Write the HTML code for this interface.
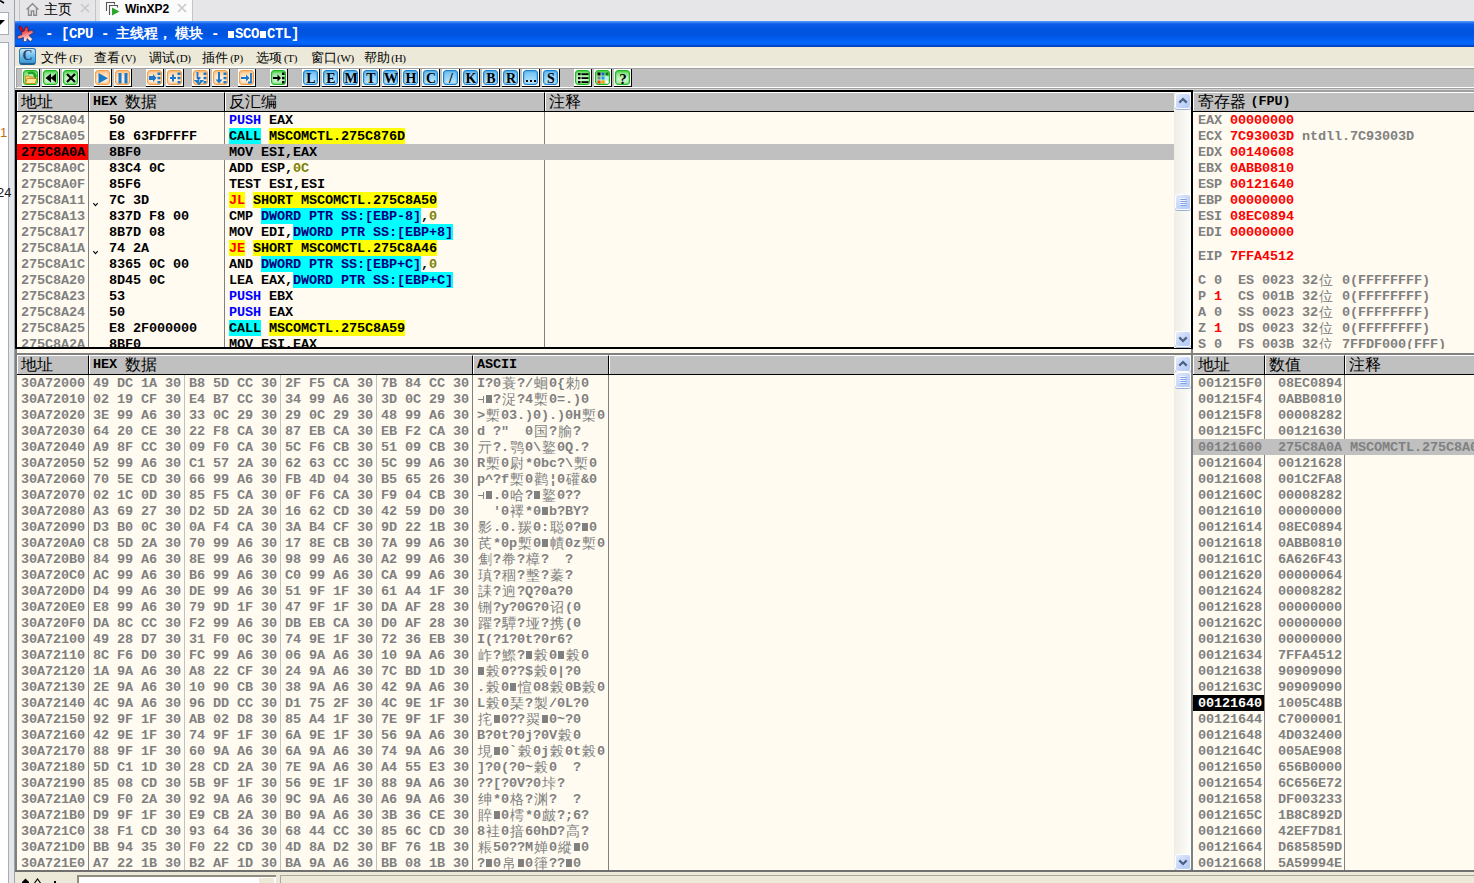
<!DOCTYPE html><html><head><meta charset="utf-8"><style>
*{box-sizing:border-box}
html,body{margin:0;padding:0}
body{width:1474px;height:883px;overflow:hidden;position:relative;background:#fff;font-family:"Liberation Mono",monospace}
.a{position:absolute}
.t{position:absolute;white-space:pre;font:bold 13.5px/16px "Liberation Mono",monospace;letter-spacing:-0.1px;height:16px}
.w{display:inline-block;width:16px;font-style:normal;font-weight:normal;font-size:14px;text-align:center;vertical-align:top;line-height:16px;letter-spacing:0}
.blk{display:inline-block;width:8px;height:16px;position:relative;font-style:normal;vertical-align:top}
.blk:after{content:"";position:absolute;left:1px;top:3px;width:6px;height:8px;background:currentColor}
.tk{display:inline-block;width:8px;height:16px;position:relative;font-style:normal;vertical-align:top}
.tk:before{content:"";position:absolute;left:1px;top:7px;width:6px;height:1px;background:currentColor}
.tk:after{content:"";position:absolute;left:6px;top:4px;width:1px;height:7px;background:currentColor}
.hdr{position:absolute;background:#c0c0c0;border-top:1px solid #fff;border-left:1px solid #fff;border-right:1px solid #000}
.ht{position:absolute;white-space:pre;font:16px/19px "Liberation Sans",sans-serif;color:#000}
.hb{font:bold 13.5px/19px "Liberation Mono",monospace;letter-spacing:-0.1px;vertical-align:top}
.hl{position:absolute;height:16px}
</style></head><body>
<div class="a" style="left:0;top:0;width:14px;height:883px;background:#e4e6ea"></div>
<div class="a" style="left:14px;top:0;width:1px;height:883px;background:#a0a4aa"></div>
<div class="a" style="left:0;top:12px;width:9px;height:23px;border:1px solid #a9adb4;border-left:none;background:#fff"></div>
<div class="a" style="left:0;top:42px;width:9px;height:841px;border-top:1px solid #a9adb4;border-right:1px solid #a9adb4;background:#fff"></div>
<svg class="a" style="left:0;top:0" width="8" height="30"><path d="M0 0.5 L4 3" stroke="#000" stroke-width="1.5"/><path d="M0 20 L5 20 L0 25 Z" fill="#000"/></svg>
<div class="a" style="left:0;top:125px;font:13px/16px 'Liberation Sans';color:#c07010;white-space:pre">1</div>
<div class="a" style="left:-3px;top:185px;font:13px/16px 'Liberation Sans';color:#202020;white-space:pre">24</div>
<div class="a" style="left:15px;top:0;width:1459px;height:21px;background:#e6e6e9"></div>
<div class="a" style="left:19px;top:0;width:1px;height:21px;background:#c4c4c8"></div>
<div class="a" style="left:95px;top:0;width:1px;height:21px;background:#c4c4c8"></div>
<div class="a" style="left:100px;top:0;width:92px;height:21px;background:#fbfbfb"></div>
<div class="a" style="left:192px;top:0;width:1px;height:21px;background:#c4c4c8"></div>
<svg class="a" style="left:25px;top:2px" width="15" height="14" viewBox="0 0 15 14"><path d="M1.5 7.5 L7.5 1.8 L13.5 7.5 M3.5 6 V13.2 H6.3 V9 H8.7 V13.2 H11.5 V6" fill="none" stroke="#8c8c8c" stroke-width="1.4"/></svg>
<div class="a" style="left:44px;top:0;font:13.5px/19px 'Liberation Sans';color:#000;white-space:pre">主页</div>
<svg class="a" style="left:80px;top:3px" width="10" height="10"><path d="M1 1 L9 9 M9 1 L1 9" stroke="#c8c8c8" stroke-width="1.6"/></svg>
<svg class="a" style="left:105px;top:1px" width="17" height="16" viewBox="0 0 17 16"><path d="M1.5 10 V1.5 H9.5 V3.5" fill="none" stroke="#555" stroke-width="1.1"/><path d="M4.5 14 V4.5 H12.5 V6.5" fill="none" stroke="#555" stroke-width="1.1"/><path d="M7 6.5 L14.5 10.5 L7 14.5 Z" fill="#2aa52a"/></svg>
<div class="a" style="left:125px;top:0;font:bold 12px/18px 'Liberation Sans';color:#000;white-space:pre;letter-spacing:-0.1px">WinXP2</div>
<svg class="a" style="left:177px;top:3px" width="10" height="10"><path d="M1 1 L9 9 M9 1 L1 9" stroke="#c8c8c8" stroke-width="1.6"/></svg>
<div class="a" style="left:15px;top:21px;width:1459px;height:26px;background:linear-gradient(#5aa0ff 0px,#2f7cf6 1.5px,#0c5ce6 3px,#0055e0 8px,#0054e0 14px,#005ef0 18px,#0066ff 22px,#005cf0 23.5px,#0044c4 25px,#003cb0 26px)"></div>
<svg class="a" style="left:17px;top:25px" width="17" height="17" viewBox="0 0 17 17"><defs><linearGradient id="sp" x1="0" y1="0" x2="0.3" y2="1"><stop offset="0" stop-color="#f00"/><stop offset="0.5" stop-color="#f46060"/><stop offset="1" stop-color="#fff0ee"/></linearGradient></defs><path d="M2 1 Q4 0.5 5 3 L6.5 6 L5 7 Q1.5 4 2 1 Z" fill="#f00" stroke="#300" stroke-opacity=".55" stroke-width=".8"/><path d="M4.5 7.5 L7.5 5.8 L8.2 1.8 L10.8 1.8 L11 6.5 L15 5 L16.5 7.5 L12 10.5 L15.5 14 L13.5 16.5 L10 13.5 L9.5 16.5 L6.5 16.5 L6.5 12.5 L1 14 L0.3 11.3 L5 9.5 Z" fill="url(#sp)" stroke="#300" stroke-opacity=".55" stroke-width=".8"/></svg>
<div class="a" style="left:45px;top:25px;font:bold 14px/18px 'Liberation Mono';color:#fff;white-space:pre"><i style="display:inline-block;width:8px;text-align:center;font-style:normal">-</i><i style="display:inline-block;width:8px"> </i><i style="display:inline-block;width:8px;text-align:center;font-style:normal">[</i><i style="display:inline-block;width:8px;text-align:center;font-style:normal">C</i><i style="display:inline-block;width:8px;text-align:center;font-style:normal">P</i><i style="display:inline-block;width:8px;text-align:center;font-style:normal">U</i><i style="display:inline-block;width:8px"> </i><i style="display:inline-block;width:8px;text-align:center;font-style:normal">-</i><i style="display:inline-block;width:8px"> </i></div>
<div class="a" style="left:116px;top:24px;font:bold 13.5px/19px 'Liberation Serif';color:#fff;white-space:pre">主线程，</div>
<div class="a" style="left:175px;top:24px;font:bold 13.5px/19px 'Liberation Serif';color:#fff;white-space:pre">模块</div>
<div class="a" style="left:203px;top:25px;font:bold 14px/18px 'Liberation Mono';color:#fff;white-space:pre"><i style="display:inline-block;width:8px"> </i><i style="display:inline-block;width:8px;text-align:center;font-style:normal">-</i><i style="display:inline-block;width:8px"> </i><i style="display:inline-block;width:8px;height:18px;position:relative;vertical-align:top"><b style="position:absolute;left:1px;top:6px;width:6px;height:7px;background:#fff"></b></i><i style="display:inline-block;width:8px;text-align:center;font-style:normal">S</i><i style="display:inline-block;width:8px;text-align:center;font-style:normal">C</i><i style="display:inline-block;width:8px;text-align:center;font-style:normal">O</i><i style="display:inline-block;width:8px;height:18px;position:relative;vertical-align:top"><b style="position:absolute;left:1px;top:6px;width:6px;height:7px;background:#fff"></b></i><i style="display:inline-block;width:8px;text-align:center;font-style:normal">C</i><i style="display:inline-block;width:8px;text-align:center;font-style:normal">T</i><i style="display:inline-block;width:8px;text-align:center;font-style:normal">L</i><i style="display:inline-block;width:8px;text-align:center;font-style:normal">]</i></div>
<div class="a" style="left:15px;top:47px;width:1459px;height:19px;background:#ece9d8"></div>
<div class="a" style="left:15px;top:66px;width:1459px;height:2px;background:#fbfaf5"></div>
<div class="a" style="left:19px;top:48px;width:17px;height:17px;border-radius:3px;background:linear-gradient(#c8e8fb,#62b8ee 55%,#3a98d8);border:1px solid #3577b0;border-bottom:2px solid #255d8e"></div>
<div class="a" style="left:19px;top:46px;width:17px;text-align:center;font:bold 14px/19px 'Liberation Serif';color:#2c4468">C</div>
<div class="a" style="left:41px;top:49px;font:12.5px/19px 'Liberation Serif';color:#000;white-space:pre">文件<span style="font:11px/19px 'Liberation Serif';display:inline-block;width:17px;text-align:center;letter-spacing:-0.3px">(F)</span></div>
<div class="a" style="left:94px;top:49px;font:12.5px/19px 'Liberation Serif';color:#000;white-space:pre">查看<span style="font:11px/19px 'Liberation Serif';display:inline-block;width:17px;text-align:center;letter-spacing:-0.3px">(V)</span></div>
<div class="a" style="left:149px;top:49px;font:12.5px/19px 'Liberation Serif';color:#000;white-space:pre">调试<span style="font:11px/19px 'Liberation Serif';display:inline-block;width:17px;text-align:center;letter-spacing:-0.3px">(D)</span></div>
<div class="a" style="left:202px;top:49px;font:12.5px/19px 'Liberation Serif';color:#000;white-space:pre">插件<span style="font:11px/19px 'Liberation Serif';display:inline-block;width:17px;text-align:center;letter-spacing:-0.3px">(P)</span></div>
<div class="a" style="left:256px;top:49px;font:12.5px/19px 'Liberation Serif';color:#000;white-space:pre">选项<span style="font:11px/19px 'Liberation Serif';display:inline-block;width:17px;text-align:center;letter-spacing:-0.3px">(T)</span></div>
<div class="a" style="left:311px;top:49px;font:12.5px/19px 'Liberation Serif';color:#000;white-space:pre">窗口<span style="font:11px/19px 'Liberation Serif';display:inline-block;width:17px;text-align:center;letter-spacing:-0.3px">(W)</span></div>
<div class="a" style="left:364px;top:49px;font:12.5px/19px 'Liberation Serif';color:#000;white-space:pre">帮助<span style="font:11px/19px 'Liberation Serif';display:inline-block;width:17px;text-align:center;letter-spacing:-0.3px">(H)</span></div>
<div class="a" style="left:16px;top:68px;width:1458px;height:20px;background:#c0c0c0;border-top:1px solid #a0a0a0;border-left:1px solid #a0a0a0;border-bottom:1px solid #fff"></div>
<div class="a" style="left:15px;top:88px;width:1459px;height:1px;background:#a0a0a0"></div>
<div class="a" style="left:15px;top:89px;width:1459px;height:1px;background:#d4d4d4"></div>
<div class="a" style="left:22px;top:69px;width:18px;height:18px;background:#fff;border-right:1px solid #000;border-bottom:1px solid #000"></div><div class="a" style="left:23px;top:70px;width:15px;height:15px;border-radius:3px;background:linear-gradient(#5cd85c 0%,#9ce89c 25%,#d0f5d0 60%,#a8eca8 100%);border:1px solid #1cb81c;box-shadow:inset 0 0 2px #1cb81c"></div><svg class="a" style="left:23px;top:70px" width="16" height="16" viewBox="0 0 16 16"><path d="M2.5 6 H6 L7 7 H12 V13.5 H2.5 Z" fill="#f8d870" stroke="#d09020" stroke-width="1"/><path d="M2.5 13.5 L4.2 8.5 H14 L12 13.5 Z" fill="#ffe89a" stroke="#d09020" stroke-width="1"/><path d="M5 3.5 Q10 1 12.5 5.5" fill="none" stroke="#20a020" stroke-width="2"/><path d="M10 5.5 L14 5 L12.5 9 Z" fill="#20a020"/></svg>
<div class="a" style="left:42px;top:69px;width:18px;height:18px;background:#fff;border-right:1px solid #000;border-bottom:1px solid #000"></div><div class="a" style="left:43px;top:70px;width:15px;height:15px;border-radius:3px;background:linear-gradient(#5cd85c 0%,#9ce89c 25%,#d0f5d0 60%,#a8eca8 100%);border:1px solid #1cb81c;box-shadow:inset 0 0 2px #1cb81c"></div><svg class="a" style="left:43px;top:70px" width="16" height="16" viewBox="0 0 16 16"><path d="M2.5 8 L8 3.5 V12.5 Z M7.5 8 L13 3.5 V12.5 Z" fill="#000"/></svg>
<div class="a" style="left:62px;top:69px;width:18px;height:18px;background:#fff;border-right:1px solid #000;border-bottom:1px solid #000"></div><div class="a" style="left:63px;top:70px;width:15px;height:15px;border-radius:3px;background:linear-gradient(#5cd85c 0%,#9ce89c 25%,#d0f5d0 60%,#a8eca8 100%);border:1px solid #1cb81c;box-shadow:inset 0 0 2px #1cb81c"></div><svg class="a" style="left:63px;top:70px" width="16" height="16" viewBox="0 0 16 16"><path d="M4 4 L12 12 M12 4 L4 12" stroke="#000" stroke-width="2.2"/></svg>
<div class="a" style="left:94px;top:69px;width:18px;height:18px;background:#fff;border-right:1px solid #000;border-bottom:1px solid #000"></div><div class="a" style="left:95px;top:70px;width:15px;height:15px;border-radius:3px;background:linear-gradient(#ffc890 0%,#ffe2c4 35%,#fff0e0 65%,#ffd8b0 100%);border:1px solid #f3a048;box-shadow:inset 0 0 2px #f3a048"></div><svg class="a" style="left:95px;top:70px" width="16" height="16" viewBox="0 0 16 16"><path d="M3.5 3 L13 8.3 L3.5 13.5 Z" fill="#1a78c8"/></svg>
<div class="a" style="left:114px;top:69px;width:18px;height:18px;background:#fff;border-right:1px solid #000;border-bottom:1px solid #000"></div><div class="a" style="left:115px;top:70px;width:15px;height:15px;border-radius:3px;background:linear-gradient(#ffc890 0%,#ffe2c4 35%,#fff0e0 65%,#ffd8b0 100%);border:1px solid #f3a048;box-shadow:inset 0 0 2px #f3a048"></div><svg class="a" style="left:115px;top:70px" width="16" height="16" viewBox="0 0 16 16"><rect x="3.5" y="3" width="3" height="10.5" fill="#1a78c8"/><rect x="9.5" y="3" width="3" height="10.5" fill="#1a78c8"/></svg>
<div class="a" style="left:146px;top:69px;width:18px;height:18px;background:#fff;border-right:1px solid #000;border-bottom:1px solid #000"></div><div class="a" style="left:147px;top:70px;width:15px;height:15px;border-radius:3px;background:linear-gradient(#ffc890 0%,#ffe2c4 35%,#fff0e0 65%,#ffd8b0 100%);border:1px solid #f3a048;box-shadow:inset 0 0 2px #f3a048"></div><svg class="a" style="left:147px;top:70px" width="16" height="16" viewBox="0 0 16 16"><path d="M2 6 H6 V4 L9.5 8 L6 12 V10 H2 Z" fill="#1a78c8"/><rect x="10.5" y="2.5" width="3" height="2.5" fill="#1a78c8"/><rect x="10.5" y="6.8" width="3" height="2.5" fill="#1a78c8"/><rect x="10.5" y="11" width="3" height="2.5" fill="#1a78c8"/></svg>
<div class="a" style="left:166px;top:69px;width:18px;height:18px;background:#fff;border-right:1px solid #000;border-bottom:1px solid #000"></div><div class="a" style="left:167px;top:70px;width:15px;height:15px;border-radius:3px;background:linear-gradient(#ffc890 0%,#ffe2c4 35%,#fff0e0 65%,#ffd8b0 100%);border:1px solid #f3a048;box-shadow:inset 0 0 2px #f3a048"></div><svg class="a" style="left:167px;top:70px" width="16" height="16" viewBox="0 0 16 16"><path d="M3 7 H5 V4.5 H7 V7 H9 V9 H7 V11.5 H5 V9 H3 Z" fill="#1a78c8"/><rect x="10.5" y="2.5" width="3" height="2.5" fill="#1a78c8"/><rect x="10.5" y="6.8" width="3" height="2.5" fill="#1a78c8"/><rect x="10.5" y="11" width="3" height="2.5" fill="#1a78c8"/></svg>
<div class="a" style="left:192px;top:69px;width:18px;height:18px;background:#fff;border-right:1px solid #000;border-bottom:1px solid #000"></div><div class="a" style="left:193px;top:70px;width:15px;height:15px;border-radius:3px;background:linear-gradient(#ffc890 0%,#ffe2c4 35%,#fff0e0 65%,#ffd8b0 100%);border:1px solid #f3a048;box-shadow:inset 0 0 2px #f3a048"></div><svg class="a" style="left:193px;top:70px" width="16" height="16" viewBox="0 0 16 16"><path d="M4.5 2 V8 L7.5 8 M5.5 8 V11 H3 L6 14 L9 11 H7" fill="none" stroke="#1a78c8" stroke-width="1.8"/><rect x="10.5" y="2.5" width="3" height="2.5" fill="#1a78c8"/><rect x="10.5" y="6.8" width="3" height="2.5" fill="#1a78c8"/><rect x="10.5" y="11" width="3" height="2.5" fill="#1a78c8"/></svg>
<div class="a" style="left:212px;top:69px;width:18px;height:18px;background:#fff;border-right:1px solid #000;border-bottom:1px solid #000"></div><div class="a" style="left:213px;top:70px;width:15px;height:15px;border-radius:3px;background:linear-gradient(#ffc890 0%,#ffe2c4 35%,#fff0e0 65%,#ffd8b0 100%);border:1px solid #f3a048;box-shadow:inset 0 0 2px #f3a048"></div><svg class="a" style="left:213px;top:70px" width="16" height="16" viewBox="0 0 16 16"><path d="M6 2 V10" stroke="#1a78c8" stroke-width="2"/><path d="M2.5 9.5 H9.5 L6 13.5 Z" fill="#1a78c8"/><rect x="10.5" y="2.5" width="3" height="2.5" fill="#1a78c8"/><rect x="10.5" y="6.8" width="3" height="2.5" fill="#1a78c8"/><rect x="10.5" y="11" width="3" height="2.5" fill="#1a78c8"/></svg>
<div class="a" style="left:238px;top:69px;width:18px;height:18px;background:#fff;border-right:1px solid #000;border-bottom:1px solid #000"></div><div class="a" style="left:239px;top:70px;width:15px;height:15px;border-radius:3px;background:linear-gradient(#ffc890 0%,#ffe2c4 35%,#fff0e0 65%,#ffd8b0 100%);border:1px solid #f3a048;box-shadow:inset 0 0 2px #f3a048"></div><svg class="a" style="left:239px;top:70px" width="16" height="16" viewBox="0 0 16 16"><path d="M2 7 H7 V4.5 L10.5 8 L7 11.5 V9 H2 Z" fill="#1a78c8"/><path d="M12 3 V12.5 H9" fill="none" stroke="#1a78c8" stroke-width="1.8"/></svg>
<div class="a" style="left:270px;top:69px;width:18px;height:18px;background:#fff;border-right:1px solid #000;border-bottom:1px solid #000"></div><div class="a" style="left:271px;top:70px;width:15px;height:15px;border-radius:3px;background:linear-gradient(#5cd85c 0%,#9ce89c 25%,#d0f5d0 60%,#a8eca8 100%);border:1px solid #1cb81c;box-shadow:inset 0 0 2px #1cb81c"></div><svg class="a" style="left:271px;top:70px" width="16" height="16" viewBox="0 0 16 16"><path d="M2 7 H6.5 V4.5 L10 8 L6.5 11.5 V9 H2 Z" fill="#000"/><rect x="11" y="2.5" width="2.5" height="2.5" fill="#000"/><rect x="11" y="6.8" width="2.5" height="2.5" fill="#000"/><rect x="11" y="11" width="2.5" height="2.5" fill="#000"/></svg>
<div class="a" style="left:302px;top:69px;width:18px;height:18px;background:#fff;border-right:1px solid #000;border-bottom:1px solid #000"></div><div class="a" style="left:303px;top:70px;width:15px;height:15px;border-radius:3px;background:linear-gradient(#6ec0f0 0%,#8fd0f6 40%,#b4e2fb 80%,#c8ecfd 100%);border:1px solid #1880d0;box-shadow:inset 0 0 2px #1880d0"></div><svg class="a" style="left:303px;top:70px" width="16" height="16" viewBox="0 0 16 16"><text x="8" y="13" text-anchor="middle" font-family="Liberation Serif" font-weight="bold" font-size="14" fill="#000">L</text></svg>
<div class="a" style="left:322px;top:69px;width:18px;height:18px;background:#fff;border-right:1px solid #000;border-bottom:1px solid #000"></div><div class="a" style="left:323px;top:70px;width:15px;height:15px;border-radius:3px;background:linear-gradient(#6ec0f0 0%,#8fd0f6 40%,#b4e2fb 80%,#c8ecfd 100%);border:1px solid #1880d0;box-shadow:inset 0 0 2px #1880d0"></div><svg class="a" style="left:323px;top:70px" width="16" height="16" viewBox="0 0 16 16"><text x="8" y="13" text-anchor="middle" font-family="Liberation Serif" font-weight="bold" font-size="14" fill="#000">E</text></svg>
<div class="a" style="left:342px;top:69px;width:18px;height:18px;background:#fff;border-right:1px solid #000;border-bottom:1px solid #000"></div><div class="a" style="left:343px;top:70px;width:15px;height:15px;border-radius:3px;background:linear-gradient(#6ec0f0 0%,#8fd0f6 40%,#b4e2fb 80%,#c8ecfd 100%);border:1px solid #1880d0;box-shadow:inset 0 0 2px #1880d0"></div><svg class="a" style="left:343px;top:70px" width="16" height="16" viewBox="0 0 16 16"><text x="8" y="13" text-anchor="middle" font-family="Liberation Serif" font-weight="bold" font-size="14" fill="#000">M</text></svg>
<div class="a" style="left:362px;top:69px;width:18px;height:18px;background:#fff;border-right:1px solid #000;border-bottom:1px solid #000"></div><div class="a" style="left:363px;top:70px;width:15px;height:15px;border-radius:3px;background:linear-gradient(#6ec0f0 0%,#8fd0f6 40%,#b4e2fb 80%,#c8ecfd 100%);border:1px solid #1880d0;box-shadow:inset 0 0 2px #1880d0"></div><svg class="a" style="left:363px;top:70px" width="16" height="16" viewBox="0 0 16 16"><text x="8" y="13" text-anchor="middle" font-family="Liberation Serif" font-weight="bold" font-size="14" fill="#000">T</text></svg>
<div class="a" style="left:382px;top:69px;width:18px;height:18px;background:#fff;border-right:1px solid #000;border-bottom:1px solid #000"></div><div class="a" style="left:383px;top:70px;width:15px;height:15px;border-radius:3px;background:linear-gradient(#6ec0f0 0%,#8fd0f6 40%,#b4e2fb 80%,#c8ecfd 100%);border:1px solid #1880d0;box-shadow:inset 0 0 2px #1880d0"></div><svg class="a" style="left:383px;top:70px" width="16" height="16" viewBox="0 0 16 16"><text x="8" y="13" text-anchor="middle" font-family="Liberation Serif" font-weight="bold" font-size="14" fill="#000">W</text></svg>
<div class="a" style="left:402px;top:69px;width:18px;height:18px;background:#fff;border-right:1px solid #000;border-bottom:1px solid #000"></div><div class="a" style="left:403px;top:70px;width:15px;height:15px;border-radius:3px;background:linear-gradient(#6ec0f0 0%,#8fd0f6 40%,#b4e2fb 80%,#c8ecfd 100%);border:1px solid #1880d0;box-shadow:inset 0 0 2px #1880d0"></div><svg class="a" style="left:403px;top:70px" width="16" height="16" viewBox="0 0 16 16"><text x="8" y="13" text-anchor="middle" font-family="Liberation Serif" font-weight="bold" font-size="14" fill="#000">H</text></svg>
<div class="a" style="left:422px;top:69px;width:18px;height:18px;background:#fff;border-right:1px solid #000;border-bottom:1px solid #000"></div><div class="a" style="left:423px;top:70px;width:15px;height:15px;border-radius:3px;background:linear-gradient(#6ec0f0 0%,#8fd0f6 40%,#b4e2fb 80%,#c8ecfd 100%);border:1px solid #1880d0;box-shadow:inset 0 0 2px #1880d0"></div><svg class="a" style="left:423px;top:70px" width="16" height="16" viewBox="0 0 16 16"><text x="8" y="13" text-anchor="middle" font-family="Liberation Serif" font-weight="bold" font-size="14" fill="#000">C</text></svg>
<div class="a" style="left:442px;top:69px;width:18px;height:18px;background:#fff;border-right:1px solid #000;border-bottom:1px solid #000"></div><div class="a" style="left:443px;top:70px;width:15px;height:15px;border-radius:3px;background:linear-gradient(#6ec0f0 0%,#8fd0f6 40%,#b4e2fb 80%,#c8ecfd 100%);border:1px solid #1880d0;box-shadow:inset 0 0 2px #1880d0"></div><svg class="a" style="left:443px;top:70px" width="16" height="16" viewBox="0 0 16 16"><text x="8" y="13" text-anchor="middle" font-family="Liberation Serif" font-weight="bold" font-size="14" fill="#000">/</text></svg>
<div class="a" style="left:462px;top:69px;width:18px;height:18px;background:#fff;border-right:1px solid #000;border-bottom:1px solid #000"></div><div class="a" style="left:463px;top:70px;width:15px;height:15px;border-radius:3px;background:linear-gradient(#6ec0f0 0%,#8fd0f6 40%,#b4e2fb 80%,#c8ecfd 100%);border:1px solid #1880d0;box-shadow:inset 0 0 2px #1880d0"></div><svg class="a" style="left:463px;top:70px" width="16" height="16" viewBox="0 0 16 16"><text x="8" y="13" text-anchor="middle" font-family="Liberation Serif" font-weight="bold" font-size="14" fill="#000">K</text></svg>
<div class="a" style="left:482px;top:69px;width:18px;height:18px;background:#fff;border-right:1px solid #000;border-bottom:1px solid #000"></div><div class="a" style="left:483px;top:70px;width:15px;height:15px;border-radius:3px;background:linear-gradient(#6ec0f0 0%,#8fd0f6 40%,#b4e2fb 80%,#c8ecfd 100%);border:1px solid #1880d0;box-shadow:inset 0 0 2px #1880d0"></div><svg class="a" style="left:483px;top:70px" width="16" height="16" viewBox="0 0 16 16"><text x="8" y="13" text-anchor="middle" font-family="Liberation Serif" font-weight="bold" font-size="14" fill="#000">B</text></svg>
<div class="a" style="left:502px;top:69px;width:18px;height:18px;background:#fff;border-right:1px solid #000;border-bottom:1px solid #000"></div><div class="a" style="left:503px;top:70px;width:15px;height:15px;border-radius:3px;background:linear-gradient(#6ec0f0 0%,#8fd0f6 40%,#b4e2fb 80%,#c8ecfd 100%);border:1px solid #1880d0;box-shadow:inset 0 0 2px #1880d0"></div><svg class="a" style="left:503px;top:70px" width="16" height="16" viewBox="0 0 16 16"><text x="8" y="13" text-anchor="middle" font-family="Liberation Serif" font-weight="bold" font-size="14" fill="#000">R</text></svg>
<div class="a" style="left:522px;top:69px;width:18px;height:18px;background:#fff;border-right:1px solid #000;border-bottom:1px solid #000"></div><div class="a" style="left:523px;top:70px;width:15px;height:15px;border-radius:3px;background:linear-gradient(#6ec0f0 0%,#8fd0f6 40%,#b4e2fb 80%,#c8ecfd 100%);border:1px solid #1880d0;box-shadow:inset 0 0 2px #1880d0"></div><svg class="a" style="left:523px;top:70px" width="16" height="16" viewBox="0 0 16 16"><rect x="3" y="10" width="2" height="2" fill="#000"/><rect x="7" y="10" width="2" height="2" fill="#000"/><rect x="11" y="10" width="2" height="2" fill="#000"/></svg>
<div class="a" style="left:542px;top:69px;width:18px;height:18px;background:#fff;border-right:1px solid #000;border-bottom:1px solid #000"></div><div class="a" style="left:543px;top:70px;width:15px;height:15px;border-radius:3px;background:linear-gradient(#6ec0f0 0%,#8fd0f6 40%,#b4e2fb 80%,#c8ecfd 100%);border:1px solid #1880d0;box-shadow:inset 0 0 2px #1880d0"></div><svg class="a" style="left:543px;top:70px" width="16" height="16" viewBox="0 0 16 16"><text x="8" y="13" text-anchor="middle" font-family="Liberation Serif" font-weight="bold" font-size="14" fill="#000">S</text></svg>
<div class="a" style="left:574px;top:69px;width:18px;height:18px;background:#fff;border-right:1px solid #000;border-bottom:1px solid #000"></div><div class="a" style="left:575px;top:70px;width:15px;height:15px;border-radius:3px;background:linear-gradient(#5cd85c 0%,#9ce89c 25%,#d0f5d0 60%,#a8eca8 100%);border:1px solid #1cb81c;box-shadow:inset 0 0 2px #1cb81c"></div><svg class="a" style="left:575px;top:70px" width="16" height="16" viewBox="0 0 16 16"><rect x="3" y="3" width="2.5" height="2.2" fill="#000"/><rect x="3" y="7" width="2.5" height="2.2" fill="#000"/><rect x="3" y="11" width="2.5" height="2.2" fill="#000"/><rect x="6.5" y="3.3" width="7" height="1.8" fill="#000"/><rect x="6.5" y="7.2" width="7" height="1.8" fill="#000"/><rect x="6.5" y="11.2" width="7" height="1.8" fill="#000"/></svg>
<div class="a" style="left:594px;top:69px;width:18px;height:18px;background:#fff;border-right:1px solid #000;border-bottom:1px solid #000"></div><div class="a" style="left:595px;top:70px;width:15px;height:15px;border-radius:3px;background:linear-gradient(#5cd85c 0%,#9ce89c 25%,#d0f5d0 60%,#a8eca8 100%);border:1px solid #1cb81c;box-shadow:inset 0 0 2px #1cb81c"></div><svg class="a" style="left:595px;top:70px" width="16" height="16" viewBox="0 0 16 16"><rect x="2.5" y="2.5" width="3" height="3" fill="#000"/><rect x="6.5" y="2.5" width="3" height="3" fill="#2060d0"/><rect x="10.5" y="2.5" width="3" height="3" fill="#008000"/><rect x="2.5" y="6.5" width="3" height="3" fill="#808080"/><rect x="6.5" y="6.5" width="3" height="3" fill="#10a0f0"/><rect x="10.5" y="6.5" width="3" height="3" fill="#c0e8ff"/><rect x="2.5" y="10.5" width="3" height="3" fill="#f04010"/><rect x="6.5" y="10.5" width="3" height="3" fill="#f8a000"/><rect x="10.5" y="10.5" width="3" height="3" fill="#fff"/></svg>
<div class="a" style="left:614px;top:69px;width:18px;height:18px;background:#fff;border-right:1px solid #000;border-bottom:1px solid #000"></div><div class="a" style="left:615px;top:70px;width:15px;height:15px;border-radius:3px;background:linear-gradient(#5cd85c 0%,#9ce89c 25%,#d0f5d0 60%,#a8eca8 100%);border:1px solid #1cb81c;box-shadow:inset 0 0 2px #1cb81c"></div><svg class="a" style="left:615px;top:70px" width="16" height="16" viewBox="0 0 16 16"><text x="8" y="13.5" text-anchor="middle" font-family="Liberation Serif" font-weight="bold" font-size="15" fill="#000">?</text></svg>
<div class="a" style="left:15px;top:90px;width:1178px;height:259px;background:#000"></div>
<div class="a" style="left:17px;top:92px;width:1174px;height:255px;background:#fffbf0"></div>
<div class="a" style="left:17px;top:92px;width:1157px;height:20px;background:#000"></div>
<div class="hdr" style="left:17px;top:92px;width:72px;height:19px;"></div>
<div class="ht" style="left:21px;top:92px">地址</div>
<div class="hdr" style="left:89px;top:92px;width:136px;height:19px;"></div>
<div class="ht" style="left:93px;top:92px"><span class="hb">HEX </span>数据</div>
<div class="hdr" style="left:225px;top:92px;width:320px;height:19px;"></div>
<div class="ht" style="left:229px;top:92px">反汇编</div>
<div class="hdr" style="left:545px;top:92px;width:629px;height:19px;border-right:none;"></div>
<div class="ht" style="left:549px;top:92px">注释</div>
<div class="a" style="left:88px;top:112px;width:1px;height:235px;background:#808080"></div>
<div class="a" style="left:224px;top:112px;width:1px;height:235px;background:#808080"></div>
<div class="a" style="left:544px;top:112px;width:1px;height:235px;background:#808080"></div>
<div class="a" style="left:17px;top:112px;width:1157px;height:235px;overflow:hidden">
<div class="t" style="left:4px;top:1px;color:#808080;">275C8A04</div>
<div class="t" style="left:92px;top:1px;color:#000;">50</div>
<div class="t" style="left:212px;top:1px;color:#000;"><span style="color:#0000ff">PUSH</span><span style="color:#000"> EAX</span></div>
<div class="t" style="left:4px;top:17px;color:#808080;">275C8A05</div>
<div class="t" style="left:92px;top:17px;color:#000;">E8 63FDFFFF</div>
<div class="hl" style="left:212px;top:16px;width:32px;background:#00ffff"></div>
<div class="hl" style="left:252px;top:16px;width:136px;background:#ffff00"></div>
<div class="t" style="left:212px;top:17px;color:#000;"><span style="color:#000">CALL</span><span style="color:#000"> </span><span style="color:#000">MSCOMCTL.275C876D</span></div>
<div class="hl" style="left:72px;top:32px;width:1085px;background:#c0c0c0"></div>
<div class="hl" style="left:0px;top:32px;width:71px;background:#ff0000"></div>
<div class="t" style="left:4px;top:33px;color:#000;">275C8A0A</div>
<div class="t" style="left:92px;top:33px;color:#000;">8BF0</div>
<div class="t" style="left:212px;top:33px;color:#000;"><span style="color:#000">MOV ESI,EAX</span></div>
<div class="t" style="left:4px;top:49px;color:#808080;">275C8A0C</div>
<div class="t" style="left:92px;top:49px;color:#000;">83C4 0C</div>
<div class="t" style="left:212px;top:49px;color:#000;"><span style="color:#000">ADD ESP,</span><span style="color:#808000">0C</span></div>
<div class="t" style="left:4px;top:65px;color:#808080;">275C8A0F</div>
<div class="t" style="left:92px;top:65px;color:#000;">85F6</div>
<div class="t" style="left:212px;top:65px;color:#000;"><span style="color:#000">TEST ESI,ESI</span></div>
<div class="t" style="left:4px;top:81px;color:#808080;">275C8A11</div>
<div class="t" style="left:92px;top:81px;color:#000;">7C 3D</div>
<svg class="a" style="left:75px;top:80px" width="8" height="16"><path d="M1.3 11.2 L3.5 13.6 L5.7 11.2" fill="none" stroke="#000" stroke-width="1.1"/></svg>
<div class="hl" style="left:212px;top:80px;width:16px;background:#ffff00"></div>
<div class="hl" style="left:236px;top:80px;width:184px;background:#ffff00"></div>
<div class="t" style="left:212px;top:81px;color:#000;"><span style="color:#ff0000">JL</span><span style="color:#000"> </span><span style="color:#000">SHORT MSCOMCTL.275C8A50</span></div>
<div class="t" style="left:4px;top:97px;color:#808080;">275C8A13</div>
<div class="t" style="left:92px;top:97px;color:#000;">837D F8 00</div>
<div class="hl" style="left:244px;top:96px;width:160px;background:#00ffff"></div>
<div class="t" style="left:212px;top:97px;color:#000;"><span style="color:#000">CMP </span><span style="color:#000080">DWORD PTR SS:[EBP-8]</span><span style="color:#000">,</span><span style="color:#808000">0</span></div>
<div class="t" style="left:4px;top:113px;color:#808080;">275C8A17</div>
<div class="t" style="left:92px;top:113px;color:#000;">8B7D 08</div>
<div class="hl" style="left:276px;top:112px;width:160px;background:#00ffff"></div>
<div class="t" style="left:212px;top:113px;color:#000;"><span style="color:#000">MOV EDI,</span><span style="color:#000080">DWORD PTR SS:[EBP+8]</span></div>
<div class="t" style="left:4px;top:129px;color:#808080;">275C8A1A</div>
<div class="t" style="left:92px;top:129px;color:#000;">74 2A</div>
<svg class="a" style="left:75px;top:128px" width="8" height="16"><path d="M1.3 11.2 L3.5 13.6 L5.7 11.2" fill="none" stroke="#000" stroke-width="1.1"/></svg>
<div class="hl" style="left:212px;top:128px;width:16px;background:#ffff00"></div>
<div class="hl" style="left:236px;top:128px;width:184px;background:#ffff00"></div>
<div class="t" style="left:212px;top:129px;color:#000;"><span style="color:#ff0000">JE</span><span style="color:#000"> </span><span style="color:#000">SHORT MSCOMCTL.275C8A46</span></div>
<div class="t" style="left:4px;top:145px;color:#808080;">275C8A1C</div>
<div class="t" style="left:92px;top:145px;color:#000;">8365 0C 00</div>
<div class="hl" style="left:244px;top:144px;width:160px;background:#00ffff"></div>
<div class="t" style="left:212px;top:145px;color:#000;"><span style="color:#000">AND </span><span style="color:#000080">DWORD PTR SS:[EBP+C]</span><span style="color:#000">,</span><span style="color:#808000">0</span></div>
<div class="t" style="left:4px;top:161px;color:#808080;">275C8A20</div>
<div class="t" style="left:92px;top:161px;color:#000;">8D45 0C</div>
<div class="hl" style="left:276px;top:160px;width:160px;background:#00ffff"></div>
<div class="t" style="left:212px;top:161px;color:#000;"><span style="color:#000">LEA EAX,</span><span style="color:#000080">DWORD PTR SS:[EBP+C]</span></div>
<div class="t" style="left:4px;top:177px;color:#808080;">275C8A23</div>
<div class="t" style="left:92px;top:177px;color:#000;">53</div>
<div class="t" style="left:212px;top:177px;color:#000;"><span style="color:#0000ff">PUSH</span><span style="color:#000"> EBX</span></div>
<div class="t" style="left:4px;top:193px;color:#808080;">275C8A24</div>
<div class="t" style="left:92px;top:193px;color:#000;">50</div>
<div class="t" style="left:212px;top:193px;color:#000;"><span style="color:#0000ff">PUSH</span><span style="color:#000"> EAX</span></div>
<div class="t" style="left:4px;top:209px;color:#808080;">275C8A25</div>
<div class="t" style="left:92px;top:209px;color:#000;">E8 2F000000</div>
<div class="hl" style="left:212px;top:208px;width:32px;background:#00ffff"></div>
<div class="hl" style="left:252px;top:208px;width:136px;background:#ffff00"></div>
<div class="t" style="left:212px;top:209px;color:#000;"><span style="color:#000">CALL</span><span style="color:#000"> </span><span style="color:#000">MSCOMCTL.275C8A59</span></div>
<div class="t" style="left:4px;top:225px;color:#808080;">275C8A2A</div>
<div class="t" style="left:92px;top:225px;color:#000;">8BF0</div>
<div class="t" style="left:212px;top:225px;color:#000;"><span style="color:#000">MOV ESI,EAX</span></div>
</div>
<div class="a" style="left:1174px;top:92px;width:17px;height:256px;background:linear-gradient(90deg,#eeede6,#f5f4ee 40%,#fdfdfa)"></div>
<div class="a" style="left:1175px;top:93px;width:16px;height:16px;border-radius:3px;background:#fff;box-shadow:0 1px 0 #9ab0e0"></div><div class="a" style="left:1176px;top:94px;width:14px;height:14px;border-radius:2px;background:linear-gradient(135deg,#e4ecfd,#c4d5f8 55%,#b4c9f4)"></div><svg class="a" style="left:1175px;top:93px" width="16" height="16"><path d="M4.3 9.6 L8 6 L11.7 9.6" fill="none" stroke="#4d6185" stroke-width="2.2"/></svg>
<div class="a" style="left:1175px;top:194px;width:16px;height:16px;border-radius:3px;background:#fff;box-shadow:0 1px 0 #9ab0e0"></div><div class="a" style="left:1176px;top:195px;width:14px;height:14px;border-radius:2px;background:linear-gradient(135deg,#e4ecfd,#c4d5f8 55%,#b4c9f4)"></div><svg class="a" style="left:1175px;top:194px" width="16" height="16"><path d="M4.5 4.5 H10.5 M4.5 6.5 H10.5 M4.5 8.5 H10.5 M4.5 10.5 H10.5" fill="none" stroke="#f4f7ff" stroke-width="1"/><path d="M5.5 5.5 H11.5 M5.5 7.5 H11.5 M5.5 9.5 H11.5 M5.5 11.5 H11.5" fill="none" stroke="#7e9fe6" stroke-width="1"/></svg>
<div class="a" style="left:1175px;top:331px;width:16px;height:16px;border-radius:3px;background:#fff;box-shadow:0 1px 0 #9ab0e0"></div><div class="a" style="left:1176px;top:332px;width:14px;height:14px;border-radius:2px;background:linear-gradient(135deg,#e4ecfd,#c4d5f8 55%,#b4c9f4)"></div><svg class="a" style="left:1175px;top:331px" width="16" height="16"><path d="M4.3 6.4 L8 10 L11.7 6.4" fill="none" stroke="#4d6185" stroke-width="2.2"/></svg>
<div class="a" style="left:1191px;top:90px;width:2px;height:259px;background:#000"></div>
<div class="a" style="left:1193px;top:90px;width:281px;height:2px;background:#a0a0a0"></div>
<div class="a" style="left:1193px;top:92px;width:281px;height:257px;background:#fffbf0"></div>
<div class="a" style="left:1193px;top:92px;width:281px;height:20px;background:#000"></div>
<div class="hdr" style="left:1193px;top:92px;width:282px;height:19px;border-right:none;"></div>
<div class="ht" style="left:1198px;top:92px">寄存器 <span class="hb">(FPU)</span></div>
<div class="t" style="left:1198px;top:113px;color:#808080;">EAX <span style="color:#ff0000">00000000</span> </div>
<div class="t" style="left:1198px;top:129px;color:#808080;">ECX <span style="color:#ff0000">7C93003D</span> ntdll.7C93003D</div>
<div class="t" style="left:1198px;top:145px;color:#808080;">EDX <span style="color:#ff0000">00140608</span> </div>
<div class="t" style="left:1198px;top:161px;color:#808080;">EBX <span style="color:#ff0000">0ABB0810</span> </div>
<div class="t" style="left:1198px;top:177px;color:#808080;">ESP <span style="color:#ff0000">00121640</span> </div>
<div class="t" style="left:1198px;top:193px;color:#808080;">EBP <span style="color:#ff0000">00000000</span> </div>
<div class="t" style="left:1198px;top:209px;color:#808080;">ESI <span style="color:#ff0000">08EC0894</span> </div>
<div class="t" style="left:1198px;top:225px;color:#808080;">EDI <span style="color:#ff0000">00000000</span> </div>
<div class="t" style="left:1198px;top:249px;color:#808080;">EIP <span style="color:#ff0000">7FFA4512</span></div>
<div class="t" style="left:1198px;top:273px;color:#808080;">C <span style="color:#808080">0</span>  ES 0023 32<i class="w">位</i> 0(FFFFFFFF)</div>
<div class="t" style="left:1198px;top:289px;color:#808080;">P <span style="color:#ff0000">1</span>  CS 001B 32<i class="w">位</i> 0(FFFFFFFF)</div>
<div class="t" style="left:1198px;top:305px;color:#808080;">A <span style="color:#808080">0</span>  SS 0023 32<i class="w">位</i> 0(FFFFFFFF)</div>
<div class="t" style="left:1198px;top:321px;color:#808080;">Z <span style="color:#ff0000">1</span>  DS 0023 32<i class="w">位</i> 0(FFFFFFFF)</div>
<div class="t" style="left:1198px;top:337px;color:#808080;">S <span style="color:#808080">0</span>  FS 003B 32<i class="w">位</i> 7FFDF000(FFF)</div>
<div class="a" style="left:15px;top:349px;width:1459px;height:4px;background:#fffbf0"></div>
<div class="a" style="left:15px;top:353px;width:1459px;height:2px;background:#808080"></div>
<div class="a" style="left:15px;top:349px;width:2px;height:523px;background:#808080"></div>
<div class="a" style="left:17px;top:355px;width:1174px;height:515px;background:#fffbf0"></div>
<div class="a" style="left:17px;top:355px;width:1157px;height:20px;background:#000"></div>
<div class="hdr" style="left:17px;top:355px;width:72px;height:19px;"></div>
<div class="ht" style="left:21px;top:355px">地址</div>
<div class="hdr" style="left:89px;top:355px;width:384px;height:19px;"></div>
<div class="ht" style="left:93px;top:355px"><span class="hb">HEX </span>数据</div>
<div class="hdr" style="left:473px;top:355px;width:136px;height:19px;"></div>
<div class="ht" style="left:477px;top:355px"><span class="hb">ASCII</span></div>
<div class="hdr" style="left:609px;top:355px;width:565px;height:19px;border-right:none;"></div>
<div class="a" style="left:88px;top:375px;width:1px;height:495px;background:#808080"></div>
<div class="a" style="left:184px;top:375px;width:1px;height:495px;background:#c0c0c0"></div>
<div class="a" style="left:280px;top:375px;width:1px;height:495px;background:#c0c0c0"></div>
<div class="a" style="left:376px;top:375px;width:1px;height:495px;background:#c0c0c0"></div>
<div class="a" style="left:472px;top:375px;width:1px;height:495px;background:#808080"></div>
<div class="a" style="left:608px;top:375px;width:1px;height:495px;background:#808080"></div>
<div class="a" style="left:17px;top:375px;width:1157px;height:495px;overflow:hidden">
<div class="t" style="left:4px;top:1px;color:#808080;">30A72000</div>
<div class="t" style="left:76px;top:1px;color:#808080;">49 DC 1A 30 B8 5D CC 30 2F F5 CA 30 7B 84 CC 30</div>
<div class="t" style="left:460px;top:1px;color:#808080;">I?0<i class="w">蓑</i>?/<i class="w">蛔</i>0{<i class="w">勑</i>0</div>
<div class="t" style="left:4px;top:17px;color:#808080;">30A72010</div>
<div class="t" style="left:76px;top:17px;color:#808080;">02 19 CF 30 E4 B7 CC 30 34 99 A6 30 3D 0C 29 30</div>
<div class="t" style="left:460px;top:17px;color:#808080;"><i class="tk"></i><i class="blk"></i>?<i class="w">浞</i>?4<i class="w">槧</i>0=.)0</div>
<div class="t" style="left:4px;top:33px;color:#808080;">30A72020</div>
<div class="t" style="left:76px;top:33px;color:#808080;">3E 99 A6 30 33 0C 29 30 29 0C 29 30 48 99 A6 30</div>
<div class="t" style="left:460px;top:33px;color:#808080;">&gt;<i class="w">槧</i>03.)0).)0H<i class="w">槧</i>0</div>
<div class="t" style="left:4px;top:49px;color:#808080;">30A72030</div>
<div class="t" style="left:76px;top:49px;color:#808080;">64 20 CE 30 22 F8 CA 30 87 EB CA 30 EB F2 CA 30</div>
<div class="t" style="left:460px;top:49px;color:#808080;">d ?"  0<i class="w">国</i>?<i class="w">腧</i>?</div>
<div class="t" style="left:4px;top:65px;color:#808080;">30A72040</div>
<div class="t" style="left:76px;top:65px;color:#808080;">A9 8F CC 30 09 F0 CA 30 5C F6 CB 30 51 09 CB 30</div>
<div class="t" style="left:460px;top:65px;color:#808080;"><i class="w">亓</i>?.<i class="w">鹗</i>0\<i class="w">鐜</i>0Q.?</div>
<div class="t" style="left:4px;top:81px;color:#808080;">30A72050</div>
<div class="t" style="left:76px;top:81px;color:#808080;">52 99 A6 30 C1 57 2A 30 62 63 CC 30 5C 99 A6 30</div>
<div class="t" style="left:460px;top:81px;color:#808080;">R<i class="w">槧</i>0<i class="w">尉</i>*0bc?\<i class="w">槧</i>0</div>
<div class="t" style="left:4px;top:97px;color:#808080;">30A72060</div>
<div class="t" style="left:76px;top:97px;color:#808080;">70 5E CD 30 66 99 A6 30 FB 4D 04 30 B5 65 26 30</div>
<div class="t" style="left:460px;top:97px;color:#808080;">p^?f<i class="w">槧</i>0<i class="w">鹳</i>¦0<i class="w">礶</i>&amp;0</div>
<div class="t" style="left:4px;top:113px;color:#808080;">30A72070</div>
<div class="t" style="left:76px;top:113px;color:#808080;">02 1C 0D 30 85 F5 CA 30 0F F6 CA 30 F9 04 CB 30</div>
<div class="t" style="left:460px;top:113px;color:#808080;"><i class="tk"></i><i class="blk"></i>.0<i class="w">哈</i>?<i class="blk"></i><i class="w">鐜</i>0??</div>
<div class="t" style="left:4px;top:129px;color:#808080;">30A72080</div>
<div class="t" style="left:76px;top:129px;color:#808080;">A3 69 27 30 D2 5D 2A 30 16 62 CD 30 42 59 D0 30</div>
<div class="t" style="left:460px;top:129px;color:#808080;">  '0<i class="w">襗</i>*0<i class="blk"></i>b?BY?</div>
<div class="t" style="left:4px;top:145px;color:#808080;">30A72090</div>
<div class="t" style="left:76px;top:145px;color:#808080;">D3 B0 0C 30 0A F4 CA 30 3A B4 CF 30 9D 22 1B 30</div>
<div class="t" style="left:460px;top:145px;color:#808080;"><i class="w">影</i>.0.<i class="w">羰</i>0:<i class="w">聪</i>0?<i class="blk"></i>0</div>
<div class="t" style="left:4px;top:161px;color:#808080;">30A720A0</div>
<div class="t" style="left:76px;top:161px;color:#808080;">C8 5D 2A 30 70 99 A6 30 17 8E CB 30 7A 99 A6 30</div>
<div class="t" style="left:460px;top:161px;color:#808080;"><i class="w">芪</i>*0p<i class="w">槧</i>0<i class="blk"></i><i class="w">幘</i>0z<i class="w">槧</i>0</div>
<div class="t" style="left:4px;top:177px;color:#808080;">30A720B0</div>
<div class="t" style="left:76px;top:177px;color:#808080;">84 99 A6 30 8E 99 A6 30 98 99 A6 30 A2 99 A6 30</div>
<div class="t" style="left:460px;top:177px;color:#808080;"><i class="w">劁</i>?<i class="w">帣</i>?<i class="w">樟</i>?  ?</div>
<div class="t" style="left:4px;top:193px;color:#808080;">30A720C0</div>
<div class="t" style="left:76px;top:193px;color:#808080;">AC 99 A6 30 B6 99 A6 30 C0 99 A6 30 CA 99 A6 30</div>
<div class="t" style="left:460px;top:193px;color:#808080;"><i class="w">瑱</i>?<i class="w">稒</i>?<i class="w">墼</i>?<i class="w">蓁</i>?</div>
<div class="t" style="left:4px;top:209px;color:#808080;">30A720D0</div>
<div class="t" style="left:76px;top:209px;color:#808080;">D4 99 A6 30 DE 99 A6 30 51 9F 1F 30 61 A4 1F 30</div>
<div class="t" style="left:460px;top:209px;color:#808080;"><i class="w">誄</i>?<i class="w">逈</i>?Q?0a?0</div>
<div class="t" style="left:4px;top:225px;color:#808080;">30A720E0</div>
<div class="t" style="left:76px;top:225px;color:#808080;">E8 99 A6 30 79 9D 1F 30 47 9F 1F 30 DA AF 28 30</div>
<div class="t" style="left:460px;top:225px;color:#808080;"><i class="w">铏</i>?y?0G?0<i class="w">诏</i>(0</div>
<div class="t" style="left:4px;top:241px;color:#808080;">30A720F0</div>
<div class="t" style="left:76px;top:241px;color:#808080;">DA 8C CC 30 F2 99 A6 30 DB EB CA 30 D0 AF 28 30</div>
<div class="t" style="left:460px;top:241px;color:#808080;"><i class="w">躍</i>?<i class="w">驔</i>?<i class="w">垭</i>?<i class="w">携</i>(0</div>
<div class="t" style="left:4px;top:257px;color:#808080;">30A72100</div>
<div class="t" style="left:76px;top:257px;color:#808080;">49 28 D7 30 31 F0 0C 30 74 9E 1F 30 72 36 EB 30</div>
<div class="t" style="left:460px;top:257px;color:#808080;">I(?1?0t?0r6?</div>
<div class="t" style="left:4px;top:273px;color:#808080;">30A72110</div>
<div class="t" style="left:76px;top:273px;color:#808080;">8C F6 D0 30 FC 99 A6 30 06 9A A6 30 10 9A A6 30</div>
<div class="t" style="left:460px;top:273px;color:#808080;"><i class="w">岞</i>?<i class="w">鰶</i>?<i class="blk"></i><i class="w">榖</i>0<i class="blk"></i><i class="w">榖</i>0</div>
<div class="t" style="left:4px;top:289px;color:#808080;">30A72120</div>
<div class="t" style="left:76px;top:289px;color:#808080;">1A 9A A6 30 A8 22 CF 30 24 9A A6 30 7C BD 1D 30</div>
<div class="t" style="left:460px;top:289px;color:#808080;"><i class="blk"></i><i class="w">榖</i>0??$<i class="w">榖</i>0|?0</div>
<div class="t" style="left:4px;top:305px;color:#808080;">30A72130</div>
<div class="t" style="left:76px;top:305px;color:#808080;">2E 9A A6 30 10 90 CB 30 38 9A A6 30 42 9A A6 30</div>
<div class="t" style="left:460px;top:305px;color:#808080;">.<i class="w">榖</i>0<i class="blk"></i><i class="w">愃</i>08<i class="w">榖</i>0B<i class="w">榖</i>0</div>
<div class="t" style="left:4px;top:321px;color:#808080;">30A72140</div>
<div class="t" style="left:76px;top:321px;color:#808080;">4C 9A A6 30 96 DD CC 30 D1 75 2F 30 4C 9E 1F 30</div>
<div class="t" style="left:460px;top:321px;color:#808080;">L<i class="w">榖</i>0<i class="w">琹</i>?<i class="w">製</i>/0L?0</div>
<div class="t" style="left:4px;top:337px;color:#808080;">30A72150</div>
<div class="t" style="left:76px;top:337px;color:#808080;">92 9F 1F 30 AB 02 D8 30 85 A4 1F 30 7E 9F 1F 30</div>
<div class="t" style="left:460px;top:337px;color:#808080;"><i class="w">挓</i><i class="blk"></i>0??<i class="w">翜</i><i class="blk"></i>0~?0</div>
<div class="t" style="left:4px;top:353px;color:#808080;">30A72160</div>
<div class="t" style="left:76px;top:353px;color:#808080;">42 9E 1F 30 74 9F 1F 30 6A 9E 1F 30 56 9A A6 30</div>
<div class="t" style="left:460px;top:353px;color:#808080;">B?0t?0j?0V<i class="w">榖</i>0</div>
<div class="t" style="left:4px;top:369px;color:#808080;">30A72170</div>
<div class="t" style="left:76px;top:369px;color:#808080;">88 9F 1F 30 60 9A A6 30 6A 9A A6 30 74 9A A6 30</div>
<div class="t" style="left:460px;top:369px;color:#808080;"><i class="w">垷</i><i class="blk"></i>0`<i class="w">榖</i>0j<i class="w">榖</i>0t<i class="w">榖</i>0</div>
<div class="t" style="left:4px;top:385px;color:#808080;">30A72180</div>
<div class="t" style="left:76px;top:385px;color:#808080;">5D C1 1D 30 28 CD 2A 30 7E 9A A6 30 A4 55 E3 30</div>
<div class="t" style="left:460px;top:385px;color:#808080;">]?0(?0~<i class="w">榖</i>0  ?</div>
<div class="t" style="left:4px;top:401px;color:#808080;">30A72190</div>
<div class="t" style="left:76px;top:401px;color:#808080;">85 08 CD 30 5B 9F 1F 30 56 9E 1F 30 88 9A A6 30</div>
<div class="t" style="left:460px;top:401px;color:#808080;">??[?0V?0<i class="w">垰</i>?</div>
<div class="t" style="left:4px;top:417px;color:#808080;">30A721A0</div>
<div class="t" style="left:76px;top:417px;color:#808080;">C9 F0 2A 30 92 9A A6 30 9C 9A A6 30 A6 9A A6 30</div>
<div class="t" style="left:460px;top:417px;color:#808080;"><i class="w">绅</i>*0<i class="w">格</i>?<i class="w">渊</i>?  ?</div>
<div class="t" style="left:4px;top:433px;color:#808080;">30A721B0</div>
<div class="t" style="left:76px;top:433px;color:#808080;">D9 9F 1F 30 E9 CB 2A 30 B0 9A A6 30 3B 36 CE 30</div>
<div class="t" style="left:460px;top:433px;color:#808080;"><i class="w">賥</i><i class="blk"></i>0<i class="w">樗</i>*0<i class="w">皻</i>?;6?</div>
<div class="t" style="left:4px;top:449px;color:#808080;">30A721C0</div>
<div class="t" style="left:76px;top:449px;color:#808080;">38 F1 CD 30 93 64 36 30 68 44 CC 30 85 6C CD 30</div>
<div class="t" style="left:460px;top:449px;color:#808080;">8<i class="w">袿</i>0<i class="w">揞</i>60hD?<i class="w">高</i>?</div>
<div class="t" style="left:4px;top:465px;color:#808080;">30A721D0</div>
<div class="t" style="left:76px;top:465px;color:#808080;">BB 94 35 30 F0 22 CD 30 4D 8A D2 30 BF 76 1B 30</div>
<div class="t" style="left:460px;top:465px;color:#808080;"><i class="w">粻</i>50??M<i class="w">婵</i>0<i class="w">縱</i><i class="blk"></i>0</div>
<div class="t" style="left:4px;top:481px;color:#808080;">30A721E0</div>
<div class="t" style="left:76px;top:481px;color:#808080;">A7 22 1B 30 B2 AF 1D 30 BA 9A A6 30 BB 08 1B 30</div>
<div class="t" style="left:460px;top:481px;color:#808080;">?<i class="blk"></i>0<i class="w">帛</i><i class="blk"></i>0<i class="w">箻</i>??<i class="blk"></i>0</div>
</div>
<div class="a" style="left:1174px;top:355px;width:17px;height:516px;background:linear-gradient(90deg,#eeede6,#f5f4ee 40%,#fdfdfa)"></div>
<div class="a" style="left:1175px;top:356px;width:16px;height:16px;border-radius:3px;background:#fff;box-shadow:0 1px 0 #9ab0e0"></div><div class="a" style="left:1176px;top:357px;width:14px;height:14px;border-radius:2px;background:linear-gradient(135deg,#e4ecfd,#c4d5f8 55%,#b4c9f4)"></div><svg class="a" style="left:1175px;top:356px" width="16" height="16"><path d="M4.3 9.6 L8 6 L11.7 9.6" fill="none" stroke="#4d6185" stroke-width="2.2"/></svg>
<div class="a" style="left:1175px;top:372px;width:16px;height:16px;border-radius:3px;background:#fff;box-shadow:0 1px 0 #9ab0e0"></div><div class="a" style="left:1176px;top:373px;width:14px;height:14px;border-radius:2px;background:linear-gradient(135deg,#e4ecfd,#c4d5f8 55%,#b4c9f4)"></div><svg class="a" style="left:1175px;top:372px" width="16" height="16"><path d="M4.5 4.5 H10.5 M4.5 6.5 H10.5 M4.5 8.5 H10.5 M4.5 10.5 H10.5" fill="none" stroke="#f4f7ff" stroke-width="1"/><path d="M5.5 5.5 H11.5 M5.5 7.5 H11.5 M5.5 9.5 H11.5 M5.5 11.5 H11.5" fill="none" stroke="#7e9fe6" stroke-width="1"/></svg>
<div class="a" style="left:1175px;top:854px;width:16px;height:16px;border-radius:3px;background:#fff;box-shadow:0 1px 0 #9ab0e0"></div><div class="a" style="left:1176px;top:855px;width:14px;height:14px;border-radius:2px;background:linear-gradient(135deg,#e4ecfd,#c4d5f8 55%,#b4c9f4)"></div><svg class="a" style="left:1175px;top:854px" width="16" height="16"><path d="M4.3 6.4 L8 10 L11.7 6.4" fill="none" stroke="#4d6185" stroke-width="2.2"/></svg>
<div class="a" style="left:1191px;top:349px;width:2px;height:523px;background:#808080"></div>
<div class="a" style="left:1193px;top:355px;width:281px;height:515px;background:#fffbf0"></div>
<div class="a" style="left:1193px;top:355px;width:281px;height:20px;background:#000"></div>
<div class="hdr" style="left:1193px;top:355px;width:72px;height:19px;"></div>
<div class="ht" style="left:1198px;top:355px">地址</div>
<div class="hdr" style="left:1265px;top:355px;width:80px;height:19px;"></div>
<div class="ht" style="left:1269px;top:355px">数值</div>
<div class="hdr" style="left:1345px;top:355px;width:130px;height:19px;border-right:none;"></div>
<div class="ht" style="left:1349px;top:355px">注释</div>
<div class="a" style="left:1264px;top:375px;width:1px;height:495px;background:#808080"></div>
<div class="a" style="left:1344px;top:375px;width:1px;height:495px;background:#808080"></div>
<div class="t" style="left:1198px;top:376px;color:#808080;">001215F0</div>
<div class="t" style="left:1278px;top:376px;color:#808080;">08EC0894</div>
<div class="t" style="left:1198px;top:392px;color:#808080;">001215F4</div>
<div class="t" style="left:1278px;top:392px;color:#808080;">0ABB0810</div>
<div class="t" style="left:1198px;top:408px;color:#808080;">001215F8</div>
<div class="t" style="left:1278px;top:408px;color:#808080;">00008282</div>
<div class="t" style="left:1198px;top:424px;color:#808080;">001215FC</div>
<div class="t" style="left:1278px;top:424px;color:#808080;">00121630</div>
<div class="hl" style="left:1193px;top:439px;width:281px;background:#c0c0c0"></div>
<div class="t" style="left:1198px;top:440px;color:#808080;">00121600</div>
<div class="t" style="left:1278px;top:440px;color:#808080;">275C8A0A</div>
<div class="t" style="left:1350px;top:440px;color:#808080;">MSCOMCTL.275C8A0A</div>
<div class="t" style="left:1198px;top:456px;color:#808080;">00121604</div>
<div class="t" style="left:1278px;top:456px;color:#808080;">00121628</div>
<div class="t" style="left:1198px;top:472px;color:#808080;">00121608</div>
<div class="t" style="left:1278px;top:472px;color:#808080;">001C2FA8</div>
<div class="t" style="left:1198px;top:488px;color:#808080;">0012160C</div>
<div class="t" style="left:1278px;top:488px;color:#808080;">00008282</div>
<div class="t" style="left:1198px;top:504px;color:#808080;">00121610</div>
<div class="t" style="left:1278px;top:504px;color:#808080;">00000000</div>
<div class="t" style="left:1198px;top:520px;color:#808080;">00121614</div>
<div class="t" style="left:1278px;top:520px;color:#808080;">08EC0894</div>
<div class="t" style="left:1198px;top:536px;color:#808080;">00121618</div>
<div class="t" style="left:1278px;top:536px;color:#808080;">0ABB0810</div>
<div class="t" style="left:1198px;top:552px;color:#808080;">0012161C</div>
<div class="t" style="left:1278px;top:552px;color:#808080;">6A626F43</div>
<div class="t" style="left:1198px;top:568px;color:#808080;">00121620</div>
<div class="t" style="left:1278px;top:568px;color:#808080;">00000064</div>
<div class="t" style="left:1198px;top:584px;color:#808080;">00121624</div>
<div class="t" style="left:1278px;top:584px;color:#808080;">00008282</div>
<div class="t" style="left:1198px;top:600px;color:#808080;">00121628</div>
<div class="t" style="left:1278px;top:600px;color:#808080;">00000000</div>
<div class="t" style="left:1198px;top:616px;color:#808080;">0012162C</div>
<div class="t" style="left:1278px;top:616px;color:#808080;">00000000</div>
<div class="t" style="left:1198px;top:632px;color:#808080;">00121630</div>
<div class="t" style="left:1278px;top:632px;color:#808080;">00000000</div>
<div class="t" style="left:1198px;top:648px;color:#808080;">00121634</div>
<div class="t" style="left:1278px;top:648px;color:#808080;">7FFA4512</div>
<div class="t" style="left:1198px;top:664px;color:#808080;">00121638</div>
<div class="t" style="left:1278px;top:664px;color:#808080;">90909090</div>
<div class="t" style="left:1198px;top:680px;color:#808080;">0012163C</div>
<div class="t" style="left:1278px;top:680px;color:#808080;">90909090</div>
<div class="hl" style="left:1193px;top:695px;width:71px;background:#000"></div>
<div class="t" style="left:1198px;top:696px;color:#fff;">00121640</div>
<div class="t" style="left:1278px;top:696px;color:#808080;">1005C48B</div>
<div class="t" style="left:1198px;top:712px;color:#808080;">00121644</div>
<div class="t" style="left:1278px;top:712px;color:#808080;">C7000001</div>
<div class="t" style="left:1198px;top:728px;color:#808080;">00121648</div>
<div class="t" style="left:1278px;top:728px;color:#808080;">4D032400</div>
<div class="t" style="left:1198px;top:744px;color:#808080;">0012164C</div>
<div class="t" style="left:1278px;top:744px;color:#808080;">005AE908</div>
<div class="t" style="left:1198px;top:760px;color:#808080;">00121650</div>
<div class="t" style="left:1278px;top:760px;color:#808080;">656B0000</div>
<div class="t" style="left:1198px;top:776px;color:#808080;">00121654</div>
<div class="t" style="left:1278px;top:776px;color:#808080;">6C656E72</div>
<div class="t" style="left:1198px;top:792px;color:#808080;">00121658</div>
<div class="t" style="left:1278px;top:792px;color:#808080;">DF003233</div>
<div class="t" style="left:1198px;top:808px;color:#808080;">0012165C</div>
<div class="t" style="left:1278px;top:808px;color:#808080;">1B8C892D</div>
<div class="t" style="left:1198px;top:824px;color:#808080;">00121660</div>
<div class="t" style="left:1278px;top:824px;color:#808080;">42EF7D81</div>
<div class="t" style="left:1198px;top:840px;color:#808080;">00121664</div>
<div class="t" style="left:1278px;top:840px;color:#808080;">D685859D</div>
<div class="t" style="left:1198px;top:856px;color:#808080;">00121668</div>
<div class="t" style="left:1278px;top:856px;color:#808080;">5A59994E</div>
<div class="a" style="left:15px;top:870px;width:1459px;height:2px;background:#707070"></div>
<div class="a" style="left:15px;top:872px;width:1459px;height:11px;background:#ece9d8"></div>
<div class="a" style="left:77px;top:875px;width:199px;height:8px;background:#fff;border-top:2px solid #908c80;border-left:2px solid #908c80"></div>
<div class="a" style="left:258px;top:877px;width:16px;height:6px;background:#ece9d8;border-top:1px solid #fff;border-left:1px solid #fff"></div>
<div class="a" style="left:280px;top:875px;width:1194px;height:8px;border-top:1px solid #aca899;border-left:1px solid #aca899"></div>
<svg class="a" style="left:20px;top:877px" width="40" height="6"><path d="M2 6 L2 5 L5.5 1.5 L9 5 L9 6 Z" fill="#000"/><path d="M14.5 6 L17.5 2 L20.5 6" fill="none" stroke="#000" stroke-width="1.2"/><rect x="34" y="4" width="2" height="2" fill="#000"/></svg>
</body></html>
